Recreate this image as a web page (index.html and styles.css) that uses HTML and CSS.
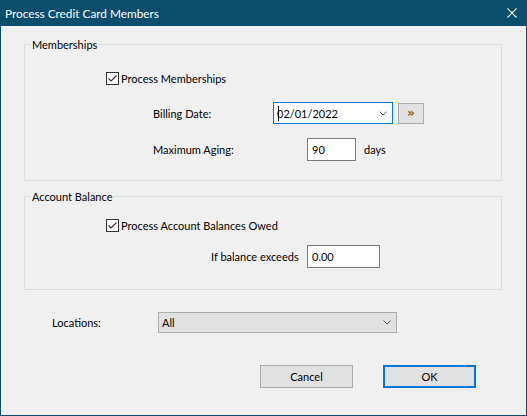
FILE: index.html
```html
<!DOCTYPE html>
<html>
<head>
<meta charset="utf-8">
<link rel="stylesheet" href="styles.css">
</head>
<body>
<div class="window">
  <div class="titlebar">
    <span class="title">Process Credit Card Members</span>
    <svg class="close" width="10" height="10" viewBox="0 0 10 10"><path d="M0.5 0.5 L9.5 9.5 M9.5 0.5 L0.5 9.5" stroke="#fff" stroke-width="1.1" fill="none"/></svg>
  </div>
  <div class="client">
    <fieldset class="group g1">
      <legend>Memberships</legend>
      <div class="row row-check">
        <span class="cb"><svg width="11" height="11" viewBox="0 0 11 11"><path d="M1.5 5.5 L4 8 L9.5 2.5" stroke="#333" stroke-width="1.2" fill="none"/></svg></span>
        <span>Process Memberships</span>
      </div>
      <div class="row row-billing">
        <span class="lbl lbl-billing">Billing Date:</span>
        <div class="combo-date">
          <span class="val"><span class="caret"></span>02/01/2022</span>
          <svg width="8" height="5" viewBox="0 0 8 5"><path d="M0.5 0.5 L4 4 L7.5 0.5" stroke="#555" stroke-width="1" fill="none"/></svg>
        </div>
        <button class="btn-more">»</button>
      </div>
      <div class="row row-aging">
        <span class="lbl lbl-aging">Maximum Aging:</span>
        <div class="field field-aging">90</div>
        <span class="days">days</span>
      </div>
    </fieldset>
    <fieldset class="group g2">
      <legend>Account Balance</legend>
      <div class="row row-check">
        <span class="cb"><svg width="11" height="11" viewBox="0 0 11 11"><path d="M1.5 5.5 L4 8 L9.5 2.5" stroke="#333" stroke-width="1.2" fill="none"/></svg></span>
        <span>Process Account Balances Owed</span>
      </div>
      <div class="row row-exceeds">
        <span class="lbl lbl-exceeds">If balance exceeds</span>
        <div class="field field-exceeds">0.00</div>
      </div>
    </fieldset>
    <div class="row row-loc">
      <span class="lbl lbl-loc">Locations:</span>
      <div class="combo-loc">
        <span>All</span>
        <svg width="8" height="5" viewBox="0 0 8 5"><path d="M0.5 0.5 L4 4 L7.5 0.5" stroke="#555" stroke-width="1" fill="none"/></svg>
      </div>
    </div>
    <div class="buttons">
      <button class="btn">Cancel</button>
      <button class="btn btn-ok">OK</button>
    </div>
  </div>
</div>
</body>
</html>
```
FILE: styles.css
```css
* { box-sizing: border-box; }
html, body { margin: 0; padding: 0; }
body {
  font-family: Lato, "Noto Sans", sans-serif;
  font-size: 11px;
  color: #000;
  background: #fff;
}
.window {
  width: 527px;
  height: 416px;
  background: #0a4d6c;
  padding: 0 1px 1px 1px;
  display: flex;
  flex-direction: column;
}
.titlebar {
  height: 26px;
  flex: none;
  display: flex;
  align-items: center;
  justify-content: space-between;
  padding: 0 9px 0 4px;
  color: #fff;
}
.title { font-size: 11.8px; }
.client {
  flex: 1;
  background: #f0f0f0;
  display: flex;
  flex-direction: column;
  align-items: flex-start;
}
.group {
  margin: 11px 0 0 23px;
  width: 478px;
  border: 1px solid #dcdcdc;
  padding: 16px 0 19px 0;
  min-width: 0;
}
.g2 {
  margin-top: 8px;
  padding: 11px 0 21px 0;
}
legend {
  margin-left: 5px;
  padding: 0 2px;
  line-height: 15px;
  height: 15px;
}
.row {
  display: flex;
  align-items: center;
}
.row-check { height: 21px; margin-left: 81px; }
.cb {
  width: 13px;
  height: 13px;
  border: 1px solid #333;
  background: #fff;
  margin-right: 2px;
  display: flex;
}
.row-billing { margin-top: 13px; height: 22px; margin-left: 128px; }
.lbl-billing { width: 120px; }
.combo-date {
  width: 120px;
  height: 22px;
  border: 1px solid #0078d7;
  background: #fff;
  display: flex;
  align-items: center;
  justify-content: space-between;
  padding: 0 5px 0 3px;
}
.caret {
  display: inline-block;
  width: 1px;
  height: 15px;
  background: #000;
  vertical-align: -3px;
  margin-right: -1px;
  position: relative;
  left: 1px;
}
.btn-more {
  margin-left: 5px;
  width: 26px;
  height: 21px;
  border: 1px solid #adadad;
  background: #e1e1e1;
  color: #9a5a14;
  font-family: "DejaVu Sans", sans-serif;
  font-size: 12px;
  font-weight: bold;
  padding: 0 0 1px 0;
  display: flex;
  align-items: center;
  justify-content: center;
}
.row-aging { margin-top: 14px; height: 23px; margin-left: 128px; }
.lbl-aging { width: 154px; }
.field {
  border: 1px solid #7a7a7a;
  background: #fff;
  height: 23px;
  padding: 0 4px 1px 4px;
  display: flex;
  align-items: center;
}
.field-aging { width: 49px; }
.days { margin-left: 8px; }
.row-exceeds { margin-top: 9px; height: 23px; margin-left: 186px; }
.lbl-exceeds { width: 96px; }
.field-exceeds { width: 73px; }
.row-loc { margin: 22px 0 0 51px; height: 21px; }
.lbl-loc { width: 106px; }
.combo-loc {
  width: 239px;
  height: 21px;
  border: 1px solid #adadad;
  background: #e1e1e1;
  padding: 0 5px 0 3px;
  display: flex;
  justify-content: space-between;
  align-items: center;
}
.buttons {
  margin: 32px 0 0 259px;
  display: flex;
  gap: 30px;
}
.btn {
  width: 93px;
  height: 23px;
  border: 1px solid #adadad;
  background: #e1e1e1;
  font: inherit;
  color: #000;
  padding: 0;
}
.btn-ok { border: 2px solid #0078d7; }
```
